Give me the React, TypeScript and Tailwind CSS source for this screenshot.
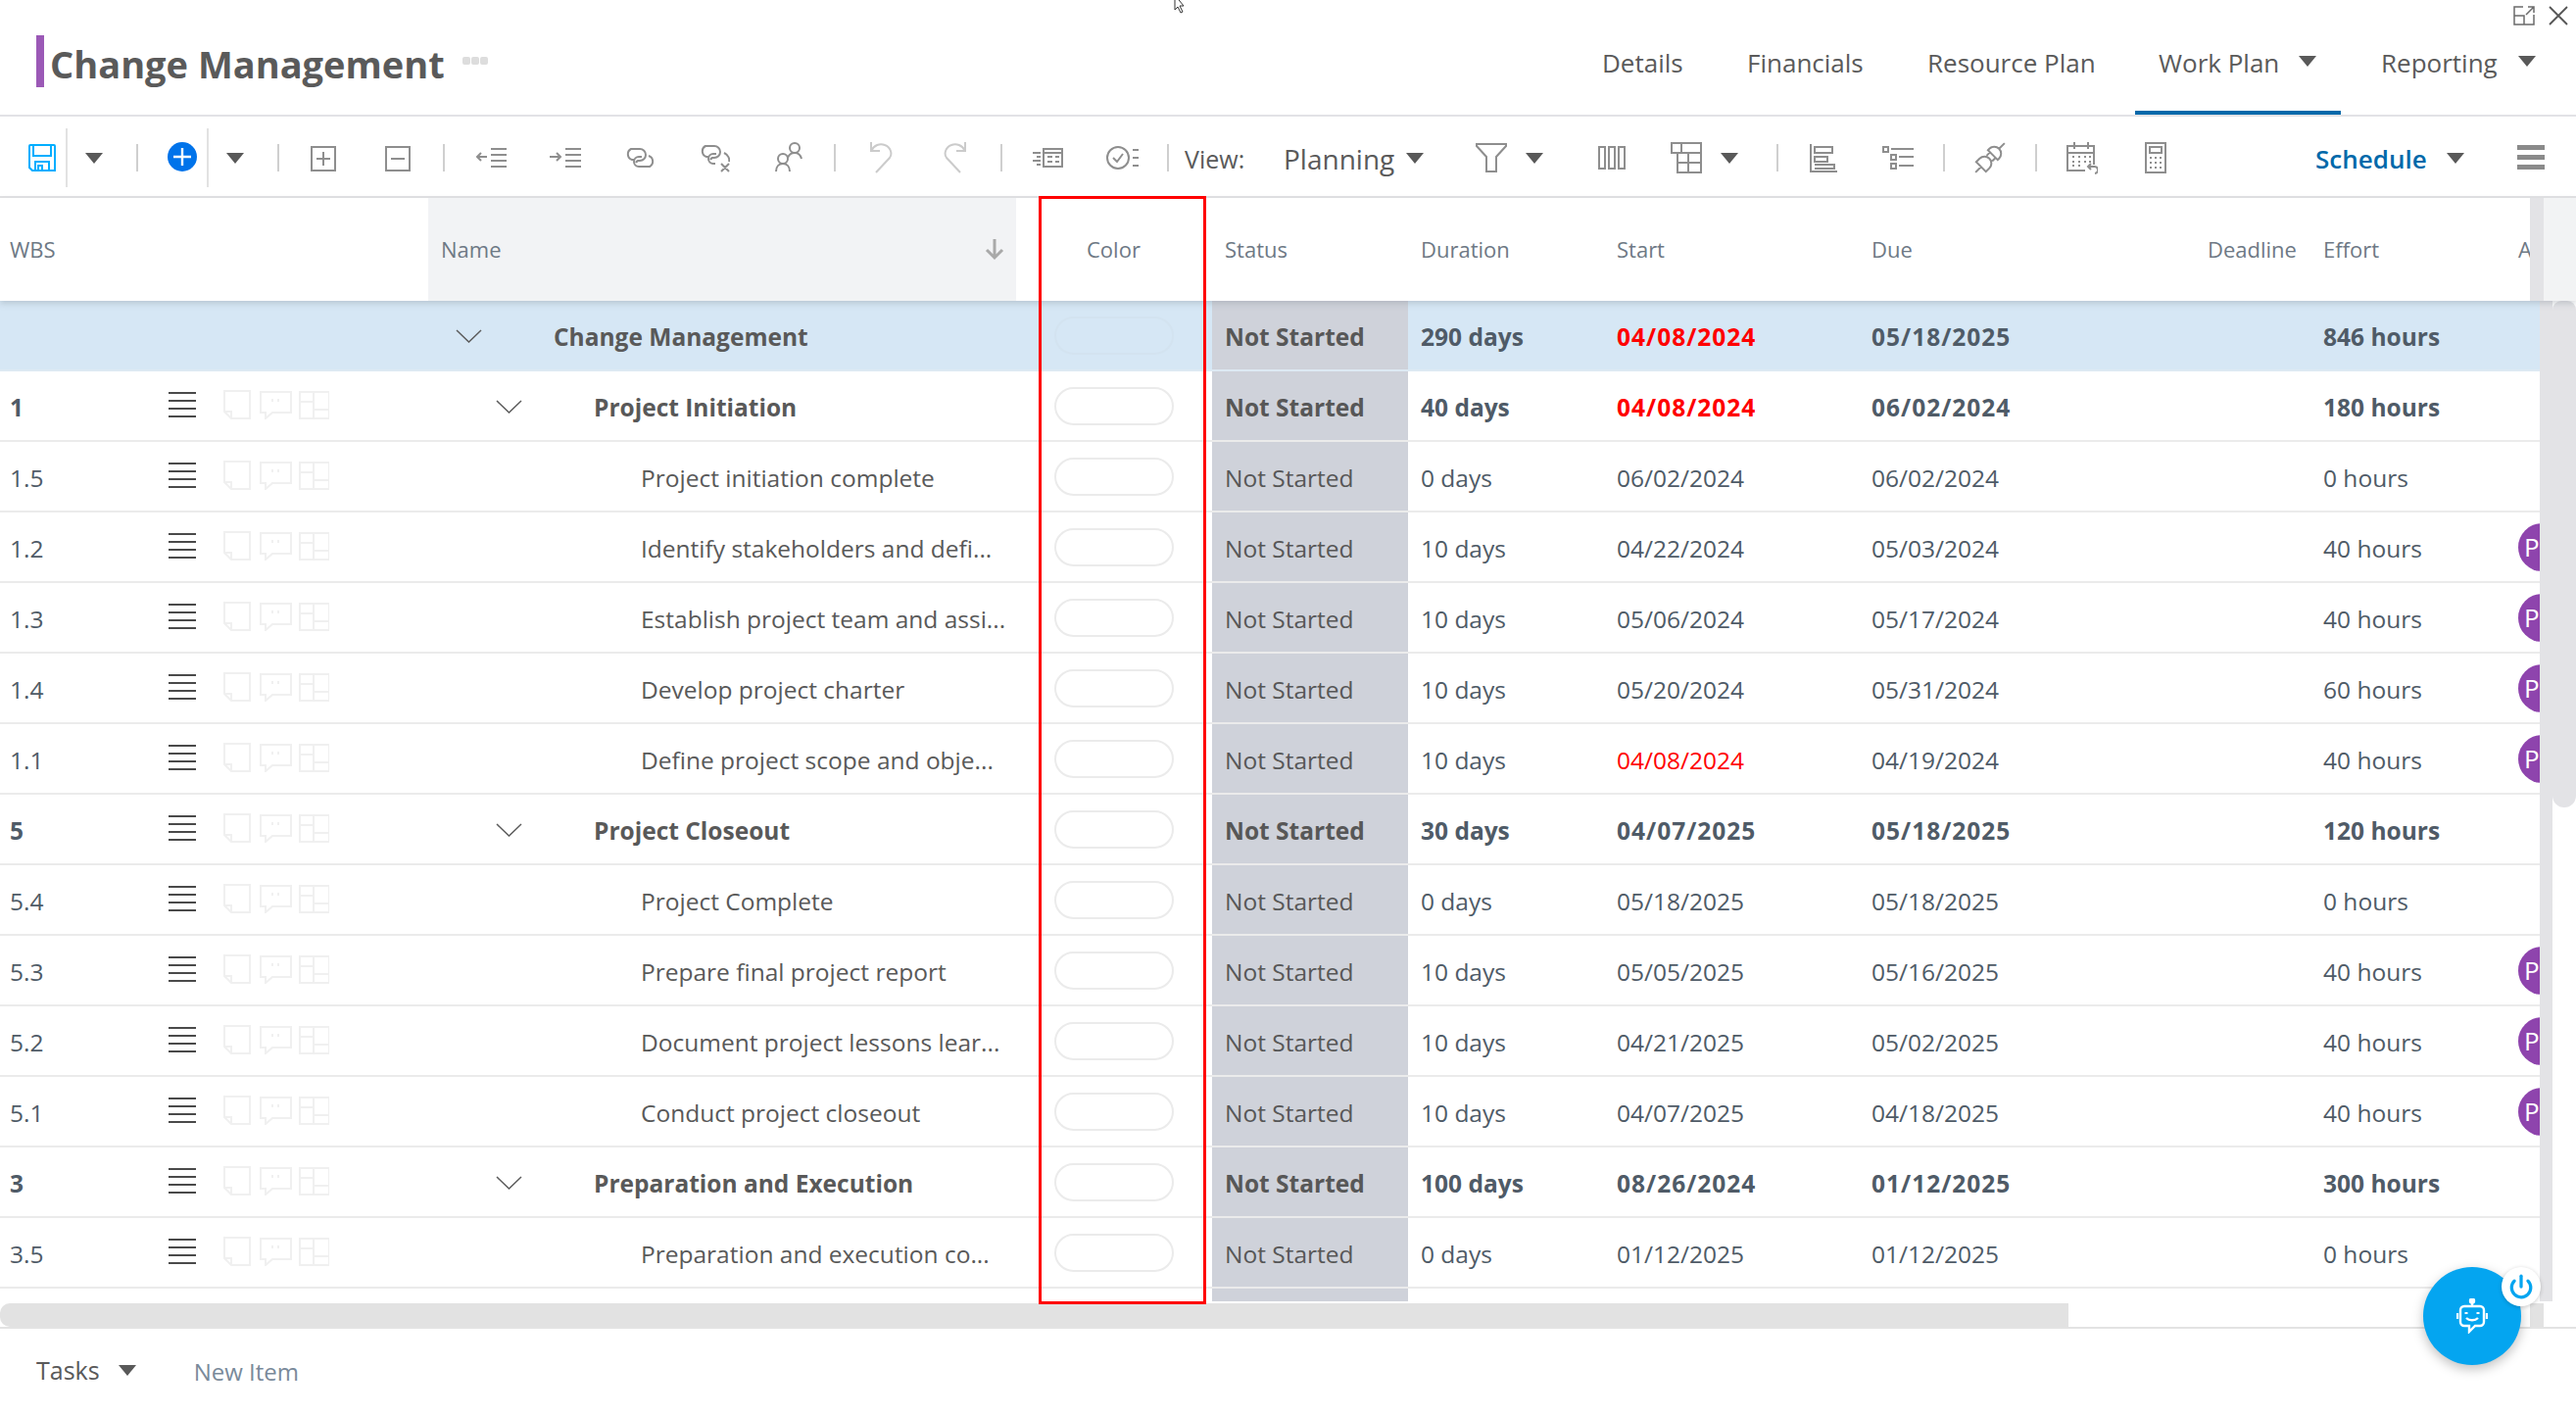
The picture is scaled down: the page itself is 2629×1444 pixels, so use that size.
import { Power } from "lucide-react";

type Row = {
  wbs: string;
  name: string;
  level: 0 | 1 | 2;
  duration: string;
  start: string;
  due: string;
  effort: string;
  late?: boolean;
  avatar?: boolean;
};

const ROWS: Row[] = [
  { wbs: "", name: "Change Management", level: 0, duration: "290 days", start: "04/08/2024", due: "05/18/2025", effort: "846 hours", late: true },
  { wbs: "1", name: "Project Initiation", level: 1, duration: "40 days", start: "04/08/2024", due: "06/02/2024", effort: "180 hours", late: true },
  { wbs: "1.5", name: "Project initiation complete", level: 2, duration: "0 days", start: "06/02/2024", due: "06/02/2024", effort: "0 hours" },
  { wbs: "1.2", name: "Identify stakeholders and defi...", level: 2, duration: "10 days", start: "04/22/2024", due: "05/03/2024", effort: "40 hours", avatar: true },
  { wbs: "1.3", name: "Establish project team and assi...", level: 2, duration: "10 days", start: "05/06/2024", due: "05/17/2024", effort: "40 hours", avatar: true },
  { wbs: "1.4", name: "Develop project charter", level: 2, duration: "10 days", start: "05/20/2024", due: "05/31/2024", effort: "60 hours", avatar: true },
  { wbs: "1.1", name: "Define project scope and obje...", level: 2, duration: "10 days", start: "04/08/2024", due: "04/19/2024", effort: "40 hours", late: true, avatar: true },
  { wbs: "5", name: "Project Closeout", level: 1, duration: "30 days", start: "04/07/2025", due: "05/18/2025", effort: "120 hours" },
  { wbs: "5.4", name: "Project Complete", level: 2, duration: "0 days", start: "05/18/2025", due: "05/18/2025", effort: "0 hours" },
  { wbs: "5.3", name: "Prepare final project report", level: 2, duration: "10 days", start: "05/05/2025", due: "05/16/2025", effort: "40 hours", avatar: true },
  { wbs: "5.2", name: "Document project lessons lear...", level: 2, duration: "10 days", start: "04/21/2025", due: "05/02/2025", effort: "40 hours", avatar: true },
  { wbs: "5.1", name: "Conduct project closeout", level: 2, duration: "10 days", start: "04/07/2025", due: "04/18/2025", effort: "40 hours", avatar: true },
  { wbs: "3", name: "Preparation and Execution", level: 1, duration: "100 days", start: "08/26/2024", due: "01/12/2025", effort: "300 hours" },
  { wbs: "3.5", name: "Preparation and execution co...", level: 2, duration: "0 days", start: "01/12/2025", due: "01/12/2025", effort: "0 hours" },
];

const COLS = "grid grid-cols-[437px_624px_176px_200px_200px_260px_343px_118px_212px_22px]";

function Caret({ className = "" }: { className?: string }) {
  return (
    <svg width="18" height="11" viewBox="0 0 18 11" className={`shrink-0 ${className}`}>
      <path d="M0 0h18l-9 11z" fill="#595959" />
    </svg>
  );
}

function Sep({ tall, className = "" }: { tall?: boolean; className?: string }) {
  return <div className={`w-[2px] shrink-0 ${tall ? "h-[60px] bg-[#e2e2e2]" : "h-[28px] bg-[#cfcfcf]"} ${className}`} />;
}

function Icon({ w, h = 32, className = "", children }: { w: number; h?: number; className?: string; children: React.ReactNode }) {
  return (
    <svg width={w} height={h} viewBox={`0 0 ${w} ${h}`} fill="none" stroke="#8e8e8e" strokeWidth="2" className={`shrink-0 ${className}`}>
      {children}
    </svg>
  );
}

function Toolbar() {
  return (
    <div className="flex h-[83px] shrink-0 items-center border-b-2 border-[#e2e2e4] pt-[2px]">
      <svg width="28" height="28" viewBox="0 0 28 28" fill="none" stroke="#00aeff" strokeWidth="2" className="ml-[29px] shrink-0">
        <path d="M2 1h24a1 1 0 0 1 1 1v25H4l-3-3V2a1 1 0 0 1 1-1z" />
        <path d="M5 1v11h18V1M7 27V18h14v9M10 27v-5h4v5" />
      </svg>
      <Sep tall className="ml-[10px]" />
      <Caret className="ml-[18px] mt-[1px]" />
      <Sep className="ml-[34px]" />
      <svg width="30" height="30" viewBox="0 0 30 30" className="mb-[1px] ml-[30px] shrink-0">
        <circle cx="15" cy="15" r="15" fill="#0073ea" />
        <path d="M15 6v18M6 15h18" stroke="#fff" strokeWidth="2.4" />
      </svg>
      <Sep tall className="ml-[10px]" />
      <Caret className="ml-[18px] mt-[1px]" />
      <Sep className="ml-[34px]" />
      <Icon w={26} h={26} className="ml-[32px] mt-[2px]">
        <rect x="1" y="1" width="24" height="24" />
        <path d="M13 6v14M6 13h14" />
      </Icon>
      <Icon w={26} h={26} className="ml-[50px] mt-[2px]">
        <rect x="1" y="1" width="24" height="24" />
        <path d="M6 13h14" />
      </Icon>
      <Sep className="ml-[33px]" />
      <Icon w={32} h={20} className="ml-[31px]">
        <path d="M16 1h16M16 7h16M16 13h16M16 19h16M12 9H2M6 5l-4 4 4 4" />
      </Icon>
      <Icon w={32} h={20} className="ml-[44px]">
        <path d="M16 1h16M16 7h16M16 13h16M16 19h16M0 9h11M7 5l4 4-4 4" />
      </Icon>
      <Icon w={32} h={20} className="ml-[44px]">
        <path d="M11 12H8a6 6 0 0 1-1-11h9a6 6 0 0 1 6 6 6 6 0 0 1-6 6h-2a5 5 0 0 0-2 2M25 8a6 6 0 0 1 1 11H15a5 5 0 0 1-5-5 5 5 0 0 1 5-5h3" />
      </Icon>
      <Icon w={32} h={28} className="ml-[44px] mt-[3px]">
        <path d="M11 12H8a6 6 0 0 1-1-11h9a6 6 0 0 1 6 6 6 6 0 0 1-6 6h-2a5 5 0 0 0-2 2M26 8c4 2 6 6 5 9M17 19h-2a5 5 0 0 1-5-5 5 5 0 0 1 5-5h3M23 19l8 8M31 19l-8 8" />
      </Icon>
      <Icon w={28} h={30} className="mb-[1px] ml-[46px]">
        <circle cx="20" cy="6" r="5" />
        <path d="M13 16c1-3 3-5 7-5s6 2 7 6" />
        <circle cx="8" cy="17" r="5" />
        <path d="M1 30c0-5 3-8 7-8s7 3 7 8" />
      </Icon>
      <Sep className="ml-[32px]" />
      <svg width="24" height="32" viewBox="0 0 24 32" fill="none" stroke="#cbcbcb" strokeWidth="2" className="ml-[34px] shrink-0">
        <path d="M2 0v9h9M2 9c3-6 9-8 14-6 6 2 8 9 5 13L7 31" />
      </svg>
      <svg width="24" height="32" viewBox="0 0 24 32" fill="none" stroke="#cbcbcb" strokeWidth="2" className="ml-[52px] shrink-0">
        <path d="M22 0v9h-9M22 9c-3-6-9-8-14-6-6 2-8 9-5 13l14 15" />
      </svg>
      <Sep className="ml-[34px]" />
      <Icon w={31} h={20} className="ml-[31px]">
        <rect x="11" y="1" width="19" height="18" />
        <path d="M11 5h19M15 9h5M23 9h4M15 14h5M23 14h4M0 5h8M4 9h4M0 13h8M4 17h4" />
      </Icon>
      <Icon w={33} h={24} className="ml-[44px]">
        <circle cx="12" cy="12" r="11" />
        <path d="m7 12 4 4 6-8M27 4h6M27 12h6M27 20h6" />
      </Icon>
      <Sep className="ml-[29px]" />
      <span className="ml-[16px] mt-[3px] w-[101px] shrink-0 text-[25px] leading-none text-[#5a5a5a]">View:</span>
      <span className="mt-[3px] w-[125px] shrink-0 text-[28px] leading-none text-[#5a5a5a]">Planning</span>
      <Caret className="mt-[1px]" />
      <Icon w={32} h={30} className="ml-[53px]">
        <path d="M1 1h30v2L21 14v15h-10V14L1 3z" />
      </Icon>
      <Caret className="ml-[19px] mt-[1px]" />
      <Icon w={28} h={24} className="ml-[56px]">
        <rect x="1" y="1" width="6" height="22" />
        <rect x="11" y="1" width="6" height="22" />
        <rect x="21" y="1" width="6" height="22" />
      </Icon>
      <Icon w={32} h={32} className="ml-[46px]">
        <path d="M1 1h30v10H1zM11 1v10M7 11v20h24V11M7 21h24M18 11v20" />
      </Icon>
      <Caret className="ml-[19px] mt-[1px]" />
      <Sep className="ml-[39px]" />
      <Icon w={28} h={30} className="ml-[32px]">
        <path d="M1 1v28h27M5 4h18v6H5zM5 14h13v5H5zM5 22h20v4H5" />
      </Icon>
      <Icon w={32} h={24} className="ml-[46px]">
        <rect x="1" y="1" width="5" height="5" />
        <rect x="9" y="9" width="5" height="5" />
        <rect x="9" y="18" width="5" height="5" />
        <path d="M9 3h23M17 11h15M17 20h15" />
      </Icon>
      <Sep className="ml-[30px]" />
      <Icon w={32} h={32} className="ml-[30px]">
        <g transform="rotate(-45 16 16)">
          <path d="M-5 16h8M3 9h5a7 7 0 0 1 0 14H3zM15 12h5M15 20h5M20 9h2a7 7 0 0 1 7 7 7 7 0 0 1-7 7h-2zM29 16h8" />
        </g>
      </Icon>
      <Sep className="ml-[30px]" />
      <Icon w={32} h={34} className="ml-[30px]">
        <path d="M28 24V5H1v25h18M1 12h27M8 1v7M22 1v7" />
        <path d="M6 16h2M12 16h2M18 16h2M23 16h2M6 21h2M12 21h2M18 21h2M23 21h2M6 25h2M12 25h2" />
        <path d="M25 23l-3 3 3 3M22 26h6a3 3 0 0 1 1 7" />
      </Icon>
      <Icon w={22} h={32} className="ml-[48px]">
        <rect x="1" y="1" width="20" height="30" />
        <rect x="5" y="5" width="12" height="6" />
        <path d="M5 16h2M10 16h2M15 16h2M5 21h2M10 21h2M15 21h2M5 26h2M10 26h2M15 26h2" />
      </Icon>
      <span className="ml-[152px] mt-[2px] w-[134px] shrink-0 text-[26px] font-semibold leading-none text-[#0069aa]">Schedule</span>
      <Caret className="mt-[1px]" />
      <div className="ml-[54px] flex w-[28px] shrink-0 flex-col gap-[5px]">
        <div className="h-[5px] bg-[#8a8a8a]" />
        <div className="h-[5px] bg-[#8a8a8a]" />
        <div className="h-[5px] bg-[#8a8a8a]" />
      </div>
    </div>
  );
}

function TableHeader() {
  return (
    <div className="relative z-10 flex h-[105px] shrink-0 shadow-[0_3px_6px_rgba(120,130,140,0.3)]">
      <div className="w-[2582px] shrink-0 overflow-hidden">
        <div className={`${COLS} h-full w-[2592px] text-[22px] leading-[105px] text-[#6e7985]`}>
          <div className="pl-[10px]">WBS</div>
          <div className="flex">
            <div className="flex w-[600px] justify-between bg-[#f2f3f5] pl-[13px] pr-[12px]">
              Name
              <svg width="20" height="24" viewBox="0 0 20 24" fill="none" stroke="#a9a9a9" strokeWidth="3" className="mt-[40px]">
                <path d="M10 2v19M2 13l8 8 8-8" />
              </svg>
            </div>
          </div>
          <div className="pl-[48px]">Color</div>
          <div className="pl-[13px]">Status</div>
          <div className="pl-[13px]">Duration</div>
          <div className="pl-[13px]">Start</div>
          <div className="pl-[13px]">Due</div>
          <div className="pl-[13px]">Deadline</div>
          <div className="pl-[13px]">Effort</div>
          <div>A</div>
        </div>
      </div>
      <div className="w-[14px] shrink-0 bg-[#e3e3e6]" />
      <div className="flex-1 bg-[#f2f3f4]" />
    </div>
  );
}

function TableRow({ row, first }: { row: Row; first: boolean }) {
  const bold = row.level < 2;
  const text = bold ? "font-bold" : "font-normal";
  const dateSpacing = bold ? "tracking-[1px]" : "";
  const indent = row.level === 0 ? "pl-[128px]" : row.level === 1 ? "pl-[169px]" : "pl-[217px]";
  return (
    <div className={`${COLS} h-[72px] grid-rows-[70px] border-b-2 text-[24.500px] leading-[74px] ${text} ${first ? "border-[#dde9f3] bg-[#d6e7f5]" : "border-[#ebebeb]"}`}>
      <div className="flex items-center">
        <span className="mt-[4px] w-[172px] pl-[10px] text-[#4f5b67]">{row.wbs}</span>
        {!first && (
          <>
            <div className="mb-[3px] flex w-[28px] flex-col gap-[6px]">
              <div className="h-[2px] bg-[#4a4a4a]" />
              <div className="h-[2px] bg-[#4a4a4a]" />
              <div className="h-[2px] bg-[#4a4a4a]" />
              <div className="h-[2px] bg-[#4a4a4a]" />
            </div>
            <svg width="108" height="30" viewBox="0 0 108 30" fill="none" stroke="#f0f0f0" strokeWidth="2" className="mb-[3px] ml-[28px]">
              <path d="M8 29h19V1H1v21zM1 22h7v7" />
              <path d="M38 2h31v21H50l-7 6v-6h-5zM50 9v3M56 9v3" strokeLinejoin="miter" />
              <path d="M78 2h30v27H78zM92 2v27M78 12h14M92 20h16" />
            </svg>
          </>
        )}
      </div>
      <div className={`relative ${indent} whitespace-nowrap text-[#595959]`}>
        {row.level < 2 && (
          <svg width="27" height="14" viewBox="0 0 27 14" fill="none" stroke="#5c5c5c" strokeWidth="1.5" className={`absolute top-[29px] ${row.level === 0 ? "left-[28px]" : "left-[69px]"}`}>
            <path d="m1 1 12.500 12L26 1" />
          </svg>
        )}
        {row.name}
      </div>
      <div className="flex items-center pl-[15px]">
        <div className={`h-[39px] w-[122px] rounded-full border-2 ${first ? "border-[#d3e3f0]" : "border-[#ebebeb]"}`} />
      </div>
      <div className="bg-[#cfd2da] pl-[13px] text-[#575757]">Not Started</div>
      <div className="pl-[13px] text-[#4f5b67]">{row.duration}</div>
      <div className={`pl-[13px] ${dateSpacing} ${row.late ? "text-[#ff0000]" : "text-[#4f5b67]"}`}>{row.start}</div>
      <div className={`pl-[13px] ${dateSpacing} text-[#4f5b67]`}>{row.due}</div>
      <div />
      <div className="pl-[13px] text-[#4f5b67]">{row.effort}</div>
      <div className="flex items-center overflow-hidden">
        {row.avatar && (
          <div className="flex h-[49px] w-[49px] shrink-0 items-center rounded-full bg-[#8e44ad] pl-[6px] text-[26px] font-normal leading-none text-white">P</div>
        )}
      </div>
    </div>
  );
}

export default function App() {
  return (
    <div className="relative flex h-[1444px] w-[2629px] flex-col overflow-hidden bg-white font-['Open_Sans',sans-serif]">
      <svg width="12" height="14" viewBox="0 0 12 14" fill="#fff" stroke="#333" className="absolute left-[1198px] top-0">
        <path d="M1-5v15l3-3 3 6 2-1-3-6h4z" />
      </svg>

      {/* title and nav */}
      <div className="flex h-[119px] shrink-0 flex-col border-b-2 border-[#e2e2e6]">
        <div className="flex h-[30px] shrink-0 items-start justify-end gap-[14px] pr-[8px] pt-[6px]">
          <svg width="22" height="20" viewBox="0 0 22 20" fill="none" stroke="#6b6b6b" strokeWidth="1.5">
            <path d="M10 1H1v18h20V9M1 10h10v9M13 9l8-8M15 1h6v6" />
          </svg>
          <svg width="20" height="20" viewBox="0 0 20 20" fill="none" stroke="#555" strokeWidth="1.8">
            <path d="m1 1 18 18M19 1 1 19" />
          </svg>
        </div>
        <div className="flex flex-1">
          <div className="ml-[37px] mt-[6px] h-[53px] w-[8px] shrink-0 bg-[#9b59b6]" />
          <span className="ml-[6px] mt-[14px] h-fit whitespace-nowrap text-[38px] font-bold leading-[42px] text-[#5a5a5a]">Change Management</span>
          <div className="ml-[18px] mt-[28px] flex h-[8px] gap-[1px]">
            <div className="h-[8px] w-[8px] rounded-[2px] bg-[#dddddd]" />
            <div className="h-[8px] w-[8px] rounded-[2px] bg-[#dddddd]" />
            <div className="h-[8px] w-[8px] rounded-[2px] bg-[#dddddd]" />
          </div>
          <nav className="ml-auto flex w-[1018px] shrink-0 text-[26px] text-[#5a5a5a]">
            <div className="w-[148px] pl-[24px] pt-[15px]">Details</div>
            <div className="w-[184px] pl-[24px] pt-[15px]">Financials</div>
            <div className="w-[236px] pl-[24px] pt-[15px]">Resource Plan</div>
            <div className="flex h-[87px] w-[210px] gap-[20px] border-b-4 border-[#0069aa] pl-[24px] pt-[15px]">
              Work Plan
              <Caret className="mt-[12px]" />
            </div>
            <div className="ml-[17px] flex gap-[21px] pl-[24px] pt-[15px]">
              Reporting
              <Caret className="mt-[12px]" />
            </div>
          </nav>
        </div>
      </div>

      <Toolbar />

      {/* table */}
      <TableHeader />
      <div className="flex h-[1021px] shrink-0">
        <div className="w-[2592px] shrink-0 overflow-hidden">
          {ROWS.map((row, i) => (
            <TableRow key={row.wbs + row.name} row={row} first={i === 0} />
          ))}
          <div className={`${COLS} h-[13px]`}>
            <div />
            <div />
            <div />
            <div className="bg-[#cfd2da]" />
          </div>
        </div>
        <div className="w-[13px] shrink-0 bg-[#e3e3e6]" />
        <div className="h-[517px] w-[24px] shrink-0 rounded-t-[12px] rounded-b-[16px] bg-[#e3e3e6]" />
      </div>

      {/* horizontal scrollbar */}
      <div className="flex h-[28px] shrink-0 border-b-2 border-[#e3e3e3] pt-[2px]">
        <div className="w-[2111px] rounded-l-[10px] bg-[#e2e2e2]" />
        <div className="ml-[471px] w-[14px] bg-[#e2e2e2]" />
      </div>

      {/* footer tabs */}
      <div className="flex flex-1 items-start pl-[37px] pt-[27px]">
        <span className="text-[25px] leading-[30px] text-[#5a5a5a]">Tasks</span>
        <Caret className="ml-[19px] mt-[10px]" />
        <span className="ml-[59px] mt-[2px] text-[24px] leading-[30px] text-[#7a8a9a]">New Item</span>
      </div>

      {/* red highlight around the Color column */}
      <div className="pointer-events-none absolute left-[1060px] top-[200px] z-20 h-[1131px] w-[171px] border-[3px] border-[#ff0000]" />

      {/* chat bot button */}
      <div className="absolute left-[2473px] top-[1293px] z-30 flex h-[100px] w-[100px] items-center justify-center rounded-full bg-[#04a5f0] shadow-[0_4px_12px_rgba(0,0,0,0.25)]">
        <svg width="32" height="36" viewBox="0 0 32 36" fill="none" stroke="#fff" strokeWidth="2.4">
          <circle cx="16" cy="2.500" r="2" fill="#fff" />
          <path d="M16 4v4" />
          <path d="M8 8h16a4 4 0 0 1 4 4v12a4 4 0 0 1-4 4h-5l-6 6v-6H8a4 4 0 0 1-4-4V12a4 4 0 0 1 4-4z" />
          <path d="M1 15v6M31 15v6M10 20c3 3 9 3 12 0" />
          <path d="M10 14v2M22 14v2" strokeWidth="3" />
        </svg>
      </div>
      <div className="absolute left-[2553px] top-[1293px] z-30 flex h-[40px] w-[40px] items-center justify-center rounded-full bg-white shadow-[0_1px_4px_rgba(0,0,0,0.2)]">
        <Power size={26} color="#04a5f0" strokeWidth={3} />
      </div>
    </div>
  );
}
